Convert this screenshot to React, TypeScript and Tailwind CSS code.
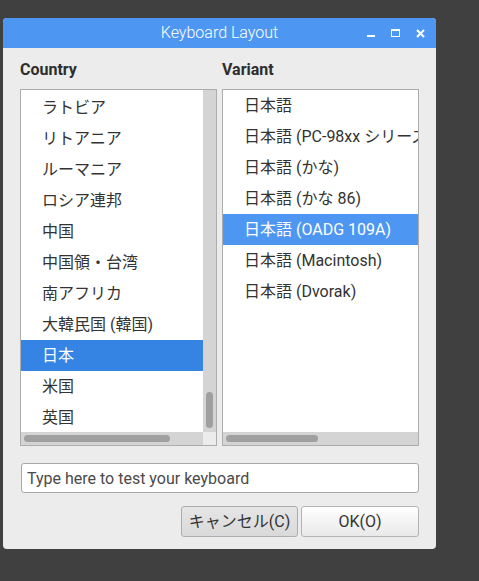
import React from "react";

const countries = [
  "ラトビア",
  "リトアニア",
  "ルーマニア",
  "ロシア連邦",
  "中国",
  "中国領・台湾",
  "南アフリカ",
  "大韓民国 (韓国)",
  "日本",
  "米国",
  "英国",
];

const variants = [
  "日本語",
  "日本語 (PC-98xx シリーズ)",
  "日本語 (かな)",
  "日本語 (かな 86)",
  "日本語 (OADG 109A)",
  "日本語 (Macintosh)",
  "日本語 (Dvorak)",
];

const font = { fontFamily: 'Roboto, "Noto Sans CJK JP", sans-serif' };

const App = () => {
  return (
    <div className="w-[479px] h-[581px] bg-[#404040] pt-[18px] pl-[3px]" style={font}>
      <div className="w-[433px] h-[531px] bg-[#ececec] rounded-[4px] overflow-hidden flex flex-col">
        {/* title bar */}
        <div className="h-[30px] bg-[#4d97f3] grid grid-cols-[1fr_auto_1fr] items-center">
          <div />
          <div className="text-white text-[16px] font-light">Keyboard Layout</div>
          <div className="flex items-center justify-end pr-[11px] gap-[16px]">
            <svg width="8" height="8" viewBox="0 0 8 8">
              <rect x="0" y="6" width="8" height="2" fill="#fff" />
            </svg>
            <svg width="9" height="8" viewBox="0 0 9 8">
              <rect x="0.5" y="0.5" width="8" height="7" fill="none" stroke="#fff" />
              <rect x="0" y="0" width="9" height="2" fill="#fff" />
            </svg>
            <svg width="9" height="9" viewBox="0 0 9 9">
              <path d="M1 1 L8 8 M8 1 L1 8" stroke="#fff" strokeWidth="2" />
            </svg>
          </div>
        </div>

        <div className="flex-1 px-[17px] pt-[12px]">
          <div className="flex gap-[5px]">
            {/* country column */}
            <div className="w-[197px]">
              <div className="h-[20px] leading-[20px] text-[16px] font-bold text-[#2e2e2e] mb-[9px]">Country</div>
              <div className="border border-[#adadad] bg-white h-[357px] flex flex-col">
                <div className="flex flex-1 overflow-hidden">
                  <div className="flex-1 pt-[2px] overflow-hidden">
                    {countries.map((c) => (
                      <div
                        key={c}
                        className={`h-[31px] flex items-center pl-[21px] text-[16px] whitespace-nowrap ${
                          c === "日本" ? "bg-[#3584e4] text-white" : "text-[#333]"
                        }`}
                      >
                        {c}
                      </div>
                    ))}
                  </div>
                  <div className="w-[13px] bg-[#d4d4d4] flex flex-col justify-end items-center pb-[4px]">
                    <div className="w-[7px] h-[36px] rounded-full bg-[#a0a0a0]" />
                  </div>
                </div>
                <div className="h-[13px] flex">
                  <div className="flex-1 bg-[#d4d4d4] flex items-center pl-[3px]">
                    <div className="w-[146px] h-[7px] rounded-full bg-[#a0a0a0]" />
                  </div>
                  <div className="w-[13px] bg-[#ececec]" />
                </div>
              </div>
            </div>

            {/* variant column */}
            <div className="w-[197px]">
              <div className="h-[20px] leading-[20px] text-[16px] font-bold text-[#2e2e2e] mb-[9px]">Variant</div>
              <div className="border border-[#adadad] bg-white h-[357px] flex flex-col">
                <div className="flex-1 overflow-hidden">
                  {variants.map((v) => (
                    <div
                      key={v}
                      className={`h-[31px] flex items-center pl-[21px] text-[16px] whitespace-nowrap overflow-hidden ${
                        v === "日本語 (OADG 109A)" ? "bg-[#4d97f3] text-white" : "text-[#333]"
                      }`}
                    >
                      {v}
                    </div>
                  ))}
                </div>
                <div className="h-[13px] bg-[#d4d4d4] flex items-center pl-[3px]">
                  <div className="w-[92px] h-[7px] rounded-full bg-[#a0a0a0]" />
                </div>
              </div>
            </div>
          </div>

          <input
            className="mt-[17px] ml-[1px] w-[398px] h-[30px] border border-[#a8a8a8] rounded-[3px] bg-white px-[5px] text-[16px] text-[#333] placeholder:text-[#4a4a4a] outline-none"
            placeholder="Type here to test your keyboard"
            style={font}
          />

          <div className="mt-[13px] flex justify-end gap-[3px]">
            <button
              className="w-[117px] h-[31px] border border-[#adadad] rounded-[3px] bg-linear-to-b from-[#e6e6e6] to-[#d9d9d9] text-[16px] text-[#333]"
              style={font}
            >
              キャンセル(C)
            </button>
            <button
              className="w-[118px] h-[31px] border border-[#b4b4b4] rounded-[3px] bg-linear-to-b from-[#ffffff] to-[#e9e9e9] text-[16px] text-[#333]"
              style={font}
            >
              OK(O)
            </button>
          </div>
        </div>
      </div>
    </div>
  );
};

export default App;
